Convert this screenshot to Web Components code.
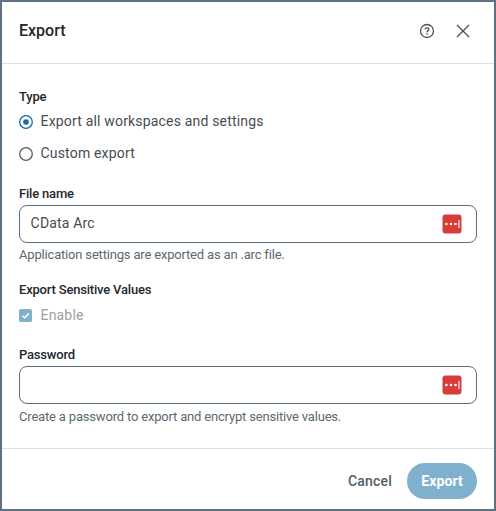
<!DOCTYPE html>
<html lang="en">
<head>
<meta charset="utf-8">
<title>Export</title>
<style>
html,body{margin:0;height:100%}
body{font-family:Roboto,"Liberation Sans",sans-serif;color:#23282d;background:#fff;overflow:hidden}
</style>
</head>
<body>
<export-dialog heading="Export">
  <form-group label="Type">
    <radio-option checked>Export all workspaces and settings</radio-option>
    <radio-option>Custom export</radio-option>
  </form-group>
  <form-group label="File name" class="field">
    <text-field>CData Arc</text-field>
    <help-text>Application settings are exported as an .arc file.</help-text>
  </form-group>
  <form-group label="Export Sensitive Values" class="check">
    <check-option>Enable</check-option>
  </form-group>
  <form-group label="Password" class="field">
    <text-field></text-field>
    <help-text style="margin-top:5px">Create a password to export and encrypt sensitive values.</help-text>
  </form-group>
  <dialog-button slot="footer">Cancel</dialog-button>
  <dialog-button slot="footer" primary>Export</dialog-button>
</export-dialog>
<script>
function define(name, html) {
  customElements.define(name, class extends HTMLElement {
    constructor() {
      super();
      const t = document.createElement('template');
      t.innerHTML = typeof html === 'function' ? html(this) : html;
      this.attachShadow({mode: 'open'}).append(t.content.cloneNode(true));
    }
  });
}

define('export-dialog', el => `<style>
:host{display:flex;flex-direction:column;box-sizing:border-box;width:496px;height:511px;border:2px solid #5f7080;background:#fff}
header{display:flex;align-items:center;box-sizing:border-box;height:62px;padding:0 23px 4px 17px;border-bottom:1px solid #dde1e4}
h1{flex:1;margin:0;font-size:16px;line-height:20px;font-weight:500;letter-spacing:0}
.icons{display:flex;gap:20px;align-items:center}
svg{display:block}
main{flex:1;display:flex;flex-direction:column;padding:25px 17px 0}
footer{display:flex;align-items:center;justify-content:flex-end;gap:15px;box-sizing:border-box;height:61px;padding:3px 17px 0;border-top:1px solid #dde1e4}
</style>
<header><h1>${el.getAttribute('heading')}</h1><div class="icons">
<svg width="16" height="16" viewBox="0 0 16 16" fill="none" stroke="#46545c" stroke-width="1.3"><circle cx="8" cy="8" r="6.5"/><path d="M6.2 6.5C6.2 5.4 7 4.9 8 4.9s1.8.6 1.8 1.5C9.8 7.6 8 7.6 8 9.2" stroke-width="1.4"/><path d="M8 10.2v1.4" stroke-width="1.5"/></svg>
<svg width="16" height="16" viewBox="0 0 16 16" fill="none" stroke="#46545c" stroke-width="1.4"><path d="M2 2l12 12M14 2L2 14"/></svg>
</div></header><main><slot></slot></main><footer><slot name="footer"></slot></footer>`);

define('form-group', el => `<style>
:host{display:flex;flex-direction:column;height:97px}
:host(.field){height:96px}
:host(.check){height:65px}
label{display:block;font-size:13px;line-height:16px;font-weight:500;letter-spacing:-.19px}
</style><label>${el.getAttribute('label')}</label><slot></slot>`);

define('radio-option', el => `<style>
:host{display:flex;align-items:center;gap:7.5px;height:32px;font-size:14px;line-height:20px;letter-spacing:.18px;color:#464d52}
svg{position:relative;top:.5px}
</style><svg width="14" height="14" viewBox="0 0 14 14"><circle cx="7" cy="7" r="6.3" fill="none" stroke="${el.hasAttribute('checked') ? '#126ca5' : '#535d64'}" stroke-width="1.3"/>${el.hasAttribute('checked') ? '<circle cx="7" cy="7" r="2.8" fill="#126ca5"/>' : ''}</svg><span><slot></slot></span>`);

define('text-field', `<style>
:host{display:flex;align-items:center;justify-content:space-between;box-sizing:border-box;height:38px;margin-top:3px;padding:0 14px 0 10.6px;border:1px solid #5c6f7c;border-radius:8px;font-size:14px;line-height:20px;letter-spacing:.18px;color:#464d52}
span{padding-bottom:2px}
</style><span><slot></slot></span><svg width="20" height="20" viewBox="0 0 20 20"><rect x=".5" y=".5" width="19" height="19" rx="3" fill="#d63c3a"/><g fill="#fff"><circle cx="4.4" cy="10" r="1.3"/><circle cx="9" cy="10" r="1.3"/><circle cx="13.5" cy="10" r="1.3"/><rect x="16.4" y="6.2" width="1.1" height="7.8"/></g></svg>`);

define('help-text', `<style>
:host{display:block;margin-top:4px;font-size:13px;line-height:16px;letter-spacing:-.18px;color:#5c6970}
</style><slot></slot>`);

define('check-option', `<style>
:host{display:flex;align-items:center;gap:8.5px;height:20px;margin-top:7px;font-size:14px;line-height:20px;letter-spacing:.18px;color:#9b9fa2}
</style><svg width="13" height="13" viewBox="0 0 13 13"><rect width="13" height="13" rx="1.8" fill="#7fb0ce"/><path d="M3.5 6.7l2.1 2 4.1-4.1" fill="none" stroke="#fff" stroke-width="1.5"/></svg><span><slot></slot></span>`);

define('dialog-button', `<style>
:host{display:flex;align-items:center;justify-content:center;height:36px;font-size:14px;line-height:20px;font-weight:500;letter-spacing:.2px;color:#505e67}
:host([primary]){width:70px;border-radius:18px;background:#7fb0ce;color:#fff;font-weight:700;letter-spacing:.1px}
</style><slot></slot>`);
</script>
</body>
</html>
